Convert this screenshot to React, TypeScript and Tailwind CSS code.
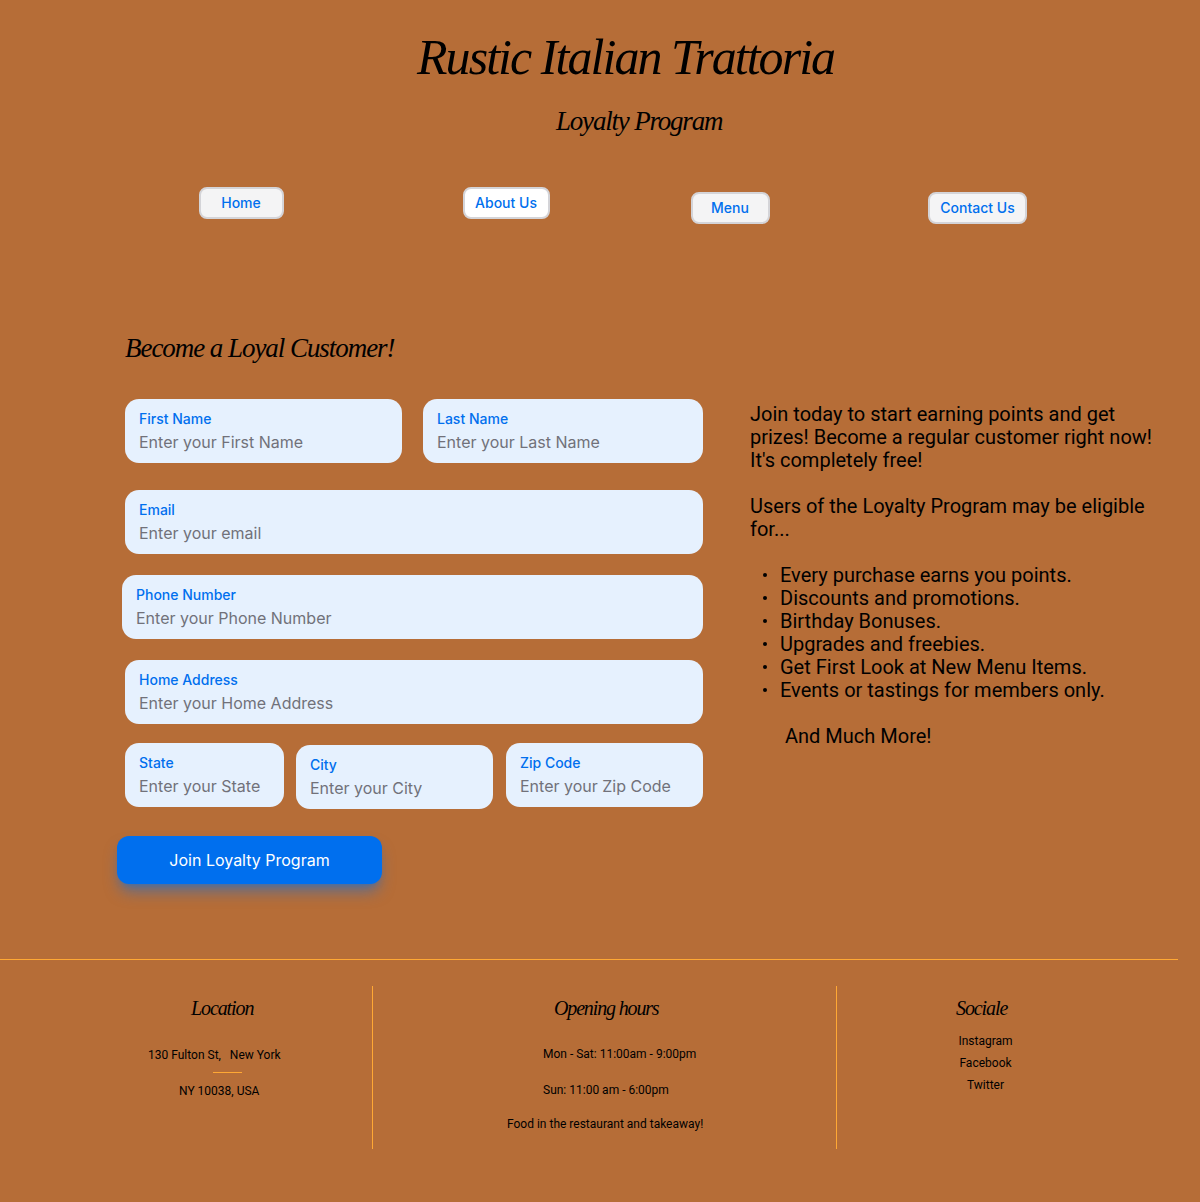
import React from "react";

const script = "font-['Liberation_Serif'] italic whitespace-nowrap text-black";

function NavButton({ label, className }: { label: string; className: string }) {
  return (
    <button
      className={`h-8 shrink-0 whitespace-nowrap rounded-lg border-2 border-[#d4d4d8] text-sm leading-5 font-medium text-[#006fee] ${className}`}
    >
      {label}
    </button>
  );
}

function Field({ label, hint, className }: { label: string; hint: string; className: string }) {
  return (
    <label className={`block h-16 shrink-0 rounded-[14px] bg-[#e6f1fe] pt-2.5 pl-3.5 ${className}`}>
      <span className="block text-sm leading-5 font-medium text-[#006fee]">{label}</span>
      <span className="mt-px block text-base leading-6 text-[#71717a]">{hint}</span>
    </label>
  );
}

const perks = [
  "Every purchase earns you points.",
  "Discounts and promotions.",
  "Birthday Bonuses.",
  "Upgrades and freebies.",
  "Get First Look at New Menu Items.",
  "Events or tastings for members only.",
];

export default function App() {
  return (
    <div className="flex h-[1202px] w-[1200px] flex-col overflow-hidden bg-[#b66d37] font-['Inter',sans-serif]">
      <header className="h-[187px] shrink-0">
        <h1 className={`${script} ml-[417px] w-fit pt-[25px] text-[50px] leading-[64px] tracking-[-1.95px]`}>
          Rustic Italian Trattoria
        </h1>
        <p className={`${script} mt-3 ml-[556px] w-fit text-[27px] leading-10 tracking-[-1.2px]`}>Loyalty Program</p>
      </header>

      <nav className="flex h-[142px] shrink-0 items-start pl-[199px]">
        <NavButton label="Home" className="w-[85px] bg-[#f4f4f5] pr-px" />
        <NavButton label="About Us" className="ml-[179px] w-[87px] bg-white pr-px" />
        <NavButton label="Menu" className="mt-[5px] ml-[141px] w-[79px] bg-[#f4f4f5] pr-px" />
        <NavButton label="Contact Us" className="mt-[5px] ml-[158px] w-[99px] bg-[#f4f4f5]" />
      </nav>

      <main className="flex h-[630px] shrink-0">
        <form className="w-[703px] shrink-0 pl-[125px]">
          <h2 className={`${script} h-[70px] w-fit text-[27px] leading-[39px] tracking-[-1.05px]`}>
            Become a Loyal Customer!
          </h2>
          <div className="flex justify-between">
            <Field label="First Name" hint="Enter your First Name" className="w-[277px]" />
            <Field label="Last Name" hint="Enter your Last Name" className="w-[280px]" />
          </div>
          <Field label="Email" hint="Enter your email" className="mt-[27px]" />
          <Field label="Phone Number" hint="Enter your Phone Number" className="mt-[21px] -ml-[3px]" />
          <Field label="Home Address" hint="Enter your Home Address" className="mt-[21px]" />
          <div className="mt-[19px] flex items-start">
            <Field label="State" hint="Enter your State" className="w-[159px]" />
            <Field label="City" hint="Enter your City" className="mt-0.5 ml-3 w-[197px]" />
            <Field label="Zip Code" hint="Enter your Zip Code" className="ml-[13px] w-[197px]" />
          </div>
          <button
            type="button"
            className="mt-[27px] -ml-2 block h-12 w-[265px] rounded-xl bg-[#006fee] text-base text-white shadow-[0_10px_15px_-3px_rgba(0,111,238,0.5),0_4px_6px_-4px_rgba(0,111,238,0.5)]"
          >
            Join Loyalty Program
          </button>
        </form>

        <section className="ml-[47px] w-[420px] pt-[74px] font-['Roboto',sans-serif] text-[20px] leading-[23px] text-black">
          <p>
            Join today to start earning points and get
            <br />
            prizes! Become a regular customer right now!
            <br />
            It's completely free!
          </p>
          <p className="mt-[23px]">
            Users of the Loyalty Program may be eligible
            <br />
            for...
          </p>
          <ul className="mt-[23px]">
            {perks.map((perk) => (
              <li key={perk} className="flex items-center pl-[13px]">
                <span className="mr-[13px] mb-0.5 size-1 rounded-full bg-black" />
                {perk}
              </li>
            ))}
          </ul>
          <p className="mt-[23px] pl-[35px]">And Much More!</p>
        </section>
      </main>

      <footer className="w-[1178px] border-t border-[#ffa834] font-['Roboto',sans-serif] text-xs leading-[14px] text-black">
        <div className="mt-[26px] flex h-[163px]">
          <div className="w-[373px] border-r border-[#ffa834]">
            <h3 className={`${script} ml-[191px] w-fit pt-2 text-[20px] leading-7 tracking-[-1.1px]`}>Location</h3>
            <p className="mt-[26px] ml-[148px] whitespace-pre">130 Fulton St,   New York</p>
            <div className="mt-[10px] ml-[213px] h-px w-[29px] bg-[#ffa834]" />
            <p className="mt-[11px] ml-[179px]">NY 10038, USA</p>
          </div>
          <div className="w-[464px] border-r border-[#ffa834]">
            <h3 className={`${script} ml-[181px] w-fit pt-2 text-[20px] leading-7 tracking-[-1.15px]`}>Opening hours</h3>
            <p className="mt-[25px] ml-[170px]">Mon - Sat: 11:00am - 9:00pm</p>
            <p className="mt-[22px] ml-[170px]">Sun: 11:00 am - 6:00pm</p>
            <p className="mt-[20px] ml-[134px]">Food in the restaurant and takeaway!</p>
          </div>
          <div>
            <h3 className={`${script} ml-[119px] w-fit pt-2 text-[20px] leading-7 tracking-[-1.1px]`}>Sociale</h3>
            <ul className="mt-3 ml-[120.5px] w-[56px] space-y-2 text-center">
              <li>Instagram</li>
              <li>Facebook</li>
              <li>Twitter</li>
            </ul>
          </div>
        </div>
      </footer>
    </div>
  );
}
